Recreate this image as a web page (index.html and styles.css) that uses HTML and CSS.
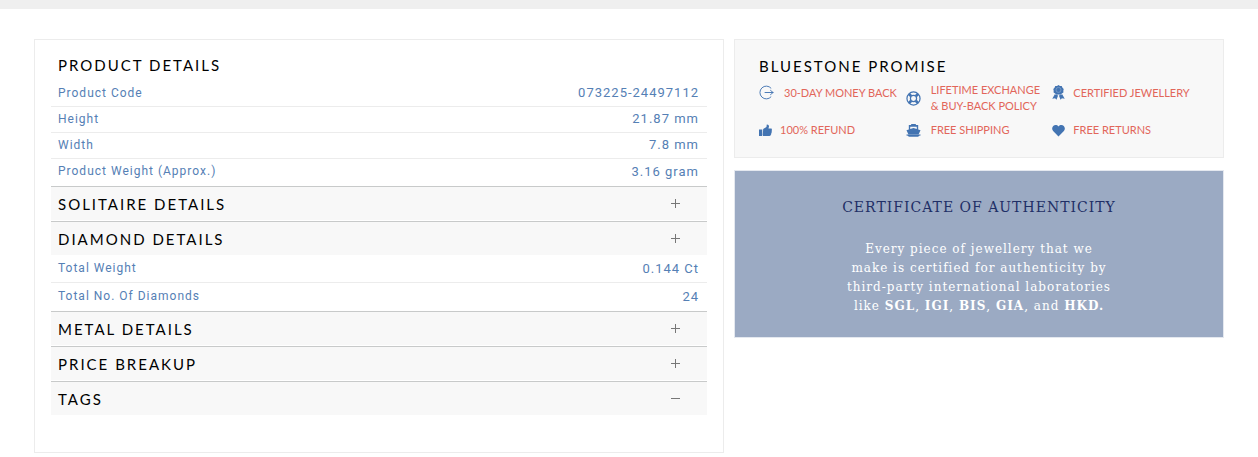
FILE: index.html
```html
<!DOCTYPE html>
<html lang="en">
<head>
<meta charset="utf-8">
<title>Product details</title>
<link rel="stylesheet" href="styles.css">
</head>
<body>
<div class="topbar"></div>
<main class="page">
  <section class="details">
    <h2 class="title">PRODUCT DETAILS</h2>
    <table class="specs">
      <tr><th scope="row">Product Code</th><td>073225-24497112</td></tr>
      <tr><th scope="row">Height</th><td>21.87 mm</td></tr>
      <tr><th scope="row">Width</th><td>7.8 mm</td></tr>
      <tr><th scope="row">Product Weight (Approx.)</th><td>3.16 gram</td></tr>
    </table>
    <button class="fold" type="button">SOLITAIRE DETAILS<svg class="sign" viewBox="0 0 9 9"><path d="M0 4.500h9M4.500 0v9"/></svg></button>
    <button class="fold" type="button">DIAMOND DETAILS<svg class="sign" viewBox="0 0 9 9"><path d="M0 4.500h9M4.500 0v9"/></svg></button>
    <table class="specs specs-roomy">
      <tr><th scope="row">Total Weight</th><td>0.144 Ct</td></tr>
      <tr><th scope="row">Total No. Of Diamonds</th><td>24</td></tr>
    </table>
    <button class="fold" type="button">METAL DETAILS<svg class="sign" viewBox="0 0 9 9"><path d="M0 4.500h9M4.500 0v9"/></svg></button>
    <button class="fold" type="button">PRICE BREAKUP<svg class="sign" viewBox="0 0 9 9"><path d="M0 4.500h9M4.500 0v9"/></svg></button>
    <button class="fold" type="button">TAGS<svg class="sign" viewBox="0 0 9 9"><path d="M0 4.500h9"/></svg></button>
  </section>
  <aside class="side">
    <section class="promise">
      <h2 class="title">BLUESTONE PROMISE</h2>
      <ul class="perks">
        <li class="perk perk-wide perk-drop"><svg class="icon" viewBox="0 0 16 16"><path class="line thin" d="M13 3.600A6.800 6.800 0 1 0 13 12.400M6 8h9.500M12 5.500l3 2.500-3 2.500"/></svg><span>30-DAY MONEY BACK</span></li>
        <li class="perk perk-wide perk-middle"><svg class="icon" viewBox="0 0 16 16"><circle class="line" cx="8" cy="8" r="7"/><circle class="line" cx="8" cy="8" r="3.300"/><path class="band" d="M3.200 3.200l2.400 2.400M12.800 3.200l-2.400 2.400M3.200 12.800l2.400-2.400M12.800 12.800l-2.400-2.400"/></svg><span>LIFETIME EXCHANGE<br>&amp; BUY-BACK POLICY</span></li>
        <li class="perk perk-drop"><svg class="icon" viewBox="0 0 14 16"><path d="M7 0l1.600 1 1.900.1.800 1.700 1.300 1.400-.4 1.900.1 1.900-1.700 1L9.300 10.400 7 10.200l-2.300.2L3.400 9 1.700 8l.1-1.900-.4-1.900 1.300-1.400.8-1.700L5.400 1z"/><circle class="ring" cx="7" cy="5.200" r="2.700"/><path d="M3 10l3.600 1.300-1.800 4.500-1.500-1.500-3 .3zM11 10l-3.600 1.300 1.800 4.500 1.500-1.500 3 .3z"/></svg><span>CERTIFIED JEWELLERY</span></li>
        <li class="perk"><svg class="icon" viewBox="0 0 14 16"><path d="M0 8h3.500v7H0zM4.500 7.500L8 5.200 8.400 2.600q2.300-.2 2.400 2L10.200 7h3q1.100.5.5 1.700.5 1-.2 1.800.4 1-.4 1.800.2 1-.5 1.600 0 1.100-1.600 1.100H4z"/></svg><span>100% REFUND</span></li>
        <li class="perk perk-wide"><svg class="icon" viewBox="0 0 16 16"><path d="M5.500 2h5v1.300H13V8l2.500.8L13.500 13H2.500L.5 8.800 3 8V3.300h2.500zM4.500 5v2.400L8 6.300l3.500 1.100V5zM.5 13.400h15v1l-1.500.2-1 1.200H3l-1-1.200-1.500-.2z"/></svg><span>FREE SHIPPING</span></li>
        <li class="perk"><svg class="icon" viewBox="0 0 14 16"><path d="M7 15.500L1.200 9.600C-2.200 5.600 3.500.4 7 4.700c3.500-4.300 9.200.9 5.800 4.900z"/></svg><span>FREE RETURNS</span></li>
      </ul>
    </section>
    <section class="certificate">
      <h2 class="certificate-title">CERTIFICATE OF AUTHENTICITY</h2>
      <p class="certificate-text">Every piece of jewellery that we<br>make is certified for authenticity by<br>third-party international laboratories<br>like <strong>SGL</strong>, <strong>IGI</strong>, <strong>BIS</strong>, <strong>GIA</strong>, and <strong>HKD.</strong></p>
    </section>
  </aside>
</main>
</body>
</html>
```
FILE: styles.css
```css
* { box-sizing: border-box; }
body {
  margin: 0;
  background: #fff;
  color: #000;
  font-family: Lato, "Open Sans", sans-serif;
}
.topbar { height: 9px; background: #efefef; }
.page {
  display: grid;
  grid-template-columns: 69fr 49fr;
  align-items: start;
  gap: 10px;
  padding: 30px 34px 0;
}
.details {
  padding: 9px 16px 37px;
  border: 1px solid #ececec;
}
.title {
  margin: 0;
  font-size: 15px;
  font-weight: 400;
  line-height: 32px;
  letter-spacing: 2px;
}
.details .title { padding-left: 7px; }
.specs {
  width: 100%;
  border-collapse: separate;
  border-spacing: 0;
  color: #5580b5;
  font-family: Roboto, Lato, sans-serif;
  font-size: 12px;
  line-height: 19px;
  letter-spacing: 1px;
}
.specs th,
.specs td {
  padding: 3px 8px 3px 7px;
  border-bottom: 1px solid #ececec;
  font-weight: 400;
  text-align: left;
}
.specs td { padding-top: 2px; padding-bottom: 4px; font-size: 13px; text-align: right; }
.specs tr:last-child th,
.specs tr:last-child td { padding-bottom: 5px; border-bottom: 0; }
.specs-roomy th,
.specs-roomy td { padding-top: 4px; padding-bottom: 4px; }
.fold {
  display: flex;
  align-items: center;
  justify-content: space-between;
  width: 100%;
  height: 34px;
  padding: 0 27px 0 7px;
  border: 0;
  border-top: 1px solid #c8caca;
  background: #f8f8f8;
  color: #000;
  font-family: inherit;
  font-size: 15px;
  letter-spacing: 2px;
  text-align: left;
}
.fold + .fold { margin-top: 1px; }
.sign {
  width: 9px;
  height: 9px;
  fill: none;
  stroke: #777;
  stroke-width: 1;
}
.side { display: grid; gap: 12px; }
.promise {
  padding: 10px 24px 19px;
  border: 1px solid #ececec;
  background: #f8f8f8;
}
.perks {
  display: grid;
  grid-template-columns: repeat(3, 1fr);
  row-gap: 8px;
  margin: 0;
  padding: 0;
  list-style: none;
  color: #e2665a;
  font-size: 11px;
  line-height: 16px;
}
.perk {
  display: flex;
  align-items: flex-start;
  gap: 8px;
  white-space: nowrap;
}
.perk-wide { gap: 10px; }
.perk-middle { align-items: center; }
.perk-drop { padding-top: 3px; }
.icon {
  flex: none;
  width: 13px;
  height: 15px;
  fill: #4374b2;
  fill-rule: evenodd;
}
.perk-wide .icon { width: 15px; }
.icon .line { fill: none; stroke: #4374b2; stroke-width: 1.3; }
.icon .thin { stroke-width: 1; }
.icon .band { stroke: #4374b2; stroke-width: 3; }
.icon .ring { fill: none; stroke: #7699c7; stroke-width: 1; }
.certificate {
  padding: 24px 16px 21px;
  border: 1px solid #e4e8ef;
  background: #9baac3;
  font-family: "DejaVu Serif", serif;
  letter-spacing: 1px;
  text-align: center;
}
.certificate-title {
  margin: 0 0 21px;
  color: #1f2f66;
  font-size: 14px;
  font-weight: 400;
  line-height: 24px;
}
.certificate-text {
  margin: 0;
  color: #fff;
  font-size: 12px;
  line-height: 19px;
}
```
